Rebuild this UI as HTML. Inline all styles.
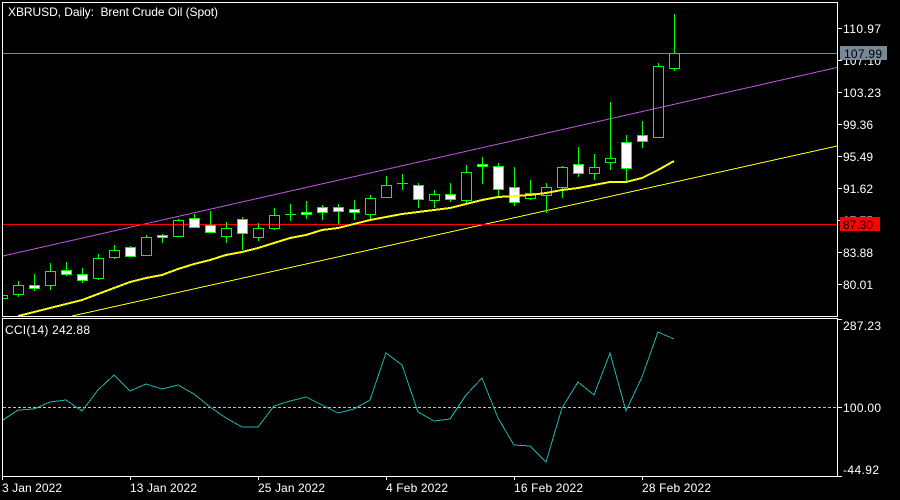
<!DOCTYPE html>
<html>
<head>
<meta charset="utf-8">
<style>
html,body{margin:0;padding:0;background:#000;width:900px;height:500px;overflow:hidden}
svg{display:block}
text{font-family:"Liberation Sans",sans-serif;font-size:12px;fill:#fff;white-space:pre}
.k{fill:#000}
</style>
</head>
<body>
<svg width="900" height="500" viewBox="0 0 900 500" xmlns="http://www.w3.org/2000/svg" shape-rendering="crispEdges">
<rect width="900" height="500" fill="#000"/>
<!-- channel and horizontal lines -->
<path d="M3 256L837 67.5" stroke="#ba55d3" fill="none"/>
<path d="M72 316L837 146" stroke="#ffff00" fill="none"/>
<path d="M3 224.5H837" stroke="#ff0000" fill="none"/>
<path d="M3 53.5H837" stroke="#778899" fill="none"/>
<!-- wicks -->
<path stroke="#00ff00" fill="none" d="M18.5 281V285M18.5 294V297M34.5 274V285M34.5 288V291M50.5 263V271M50.5 285V290M66.5 262V270M66.5 274V276M82.5 268V274M82.5 280V283M98.5 254V258M98.5 278V280M114.5 245V250M114.5 257V259M130.5 246V247M130.5 256V257M146.5 235V237M146.5 255V256M162.5 234V235M162.5 237V243M178.5 219V220M194.5 214V218M194.5 227V228M210.5 211V225M226.5 222V228M226.5 236V243M242.5 217V219M242.5 233V250M258.5 223V228M258.5 237V241M274.5 208V215M274.5 228V230M290.5 204V221M306.5 201V212M306.5 214V219M322.5 205V207M322.5 212V220M338.5 204V207M338.5 211V224M354.5 200V209M354.5 212V220M370.5 195V198M370.5 214V221M386.5 176V185M402.5 174V190M418.5 183V185M418.5 199V208M434.5 190V194M434.5 200V208M450.5 183V194M450.5 199V202M466.5 165V172M466.5 200V204M482.5 157V164M482.5 166V184M498.5 163V166M498.5 189V197M514.5 167V187M514.5 202V206M530.5 180V193M530.5 198V200M546.5 183V187M546.5 195V213M562.5 166V167M562.5 187V198M578.5 147V164M578.5 173V177M594.5 154V167M594.5 173V180M610.5 102V158M610.5 162V170M626.5 135V142M626.5 168V182M642.5 121V135M642.5 141V148M658.5 63V66M658.5 137V138M674.5 14V53M674.5 68V71M285 214.5H296M397 183.5H408"/>
<!-- hollow bodies -->
<path stroke="#00ff00" fill="none" d="M2.5 295.5h5v3h-5zM13.5 285.5h10v9h-10zM45.5 271.5h10v14h-10zM93.5 258.5h10v20h-10zM109.5 250.5h10v7h-10zM141.5 237.5h10v18h-10zM173.5 220.5h10v16h-10zM221.5 228.5h10v8h-10zM253.5 228.5h10v9h-10zM269.5 215.5h10v13h-10zM365.5 198.5h10v16h-10zM381.5 185.5h10v12h-10zM429.5 194.5h10v6h-10zM461.5 172.5h10v28h-10zM525.5 193.5h10v5h-10zM541.5 187.5h10v8h-10zM557.5 167.5h10v20h-10zM589.5 167.5h10v6h-10zM605.5 158.5h10v4h-10zM653.5 66.5h10v71h-10zM669.5 53.5h10v15h-10z"/>
<!-- white bodies -->
<path stroke="#00ff00" fill="#ffffff" d="M29.5 285.5h10v3h-10zM61.5 270.5h10v4h-10zM77.5 274.5h10v6h-10zM125.5 247.5h10v9h-10zM157.5 235.5h10v2h-10zM189.5 218.5h10v9h-10zM205.5 225.5h10v7h-10zM237.5 219.5h10v14h-10zM301.5 212.5h10v2h-10zM317.5 207.5h10v5h-10zM333.5 207.5h10v4h-10zM349.5 209.5h10v3h-10zM413.5 185.5h10v14h-10zM445.5 194.5h10v5h-10zM477.5 164.5h10v2h-10zM493.5 166.5h10v23h-10zM509.5 187.5h10v15h-10zM573.5 164.5h10v9h-10zM621.5 142.5h10v26h-10zM637.5 135.5h10v6h-10z"/>
<!-- moving average -->
<path stroke="#ffff00" stroke-width="2" fill="none" d="M18 316L82 300L98 294L114 288L130 282L146 278L162 275L178 269L194 264L210 260L226 255L242 252L258 248L274 243L290 238L306 235L322 230L338 228L354 224L370 220L386 217L402 214L418 212L434 210L450 208L466 204L482 200L498 197L514 196L530 195L546 193L562 190L578 188L594 185L610 182L626 182L642 178L658 170L674 161"/>
<!-- CCI -->
<path stroke="#c0c0c0" stroke-dasharray="3 2" fill="none" d="M3 407.5H837"/>
<path stroke="#20b2aa" fill="none" d="M3 420L18 410L34 409L50 402L66 400L82 411L98 390L114 375L130 391L146 384L162 389L178 385L194 394L210 407L226 418L242 427L258 427L274 406L290 401L306 397L322 405L338 413L354 409L370 400L386 353L402 365L418 412L434 421L450 419L466 395L482 378L498 418L514 445L530 446L546 462L562 408L578 382L594 395L610 353L626 411L642 377L658 332L674 339"/>
<!-- frames and ticks -->
<path stroke="#ffffff" fill="none" d="M2.5 2.5H837.5V316.5H2.5ZM2.5 318.5H837.5V476.5H2.5ZM838 28.5h4M838 60.5h4M838 92.5h4M838 124.5h4M838 156.5h4M838 188.5h4M838 220.5h4M838 252.5h4M838 284.5h4M838 319.5h4M838 407.5h4M838 476.5h4M2.5 477v3M130.5 477v3M258.5 477v3M386.5 477v3M514.5 477v3M642.5 477v3"/>
<!-- titles -->
<g shape-rendering="auto">
<text x="8" y="16" textLength="210">XBRUSD, Daily:  Brent Crude Oil (Spot)</text>
<text x="5" y="334" textLength="85">CCI(14) 242.88</text>
<text x="843" y="33" textLength="38">110.97</text>
<text x="843" y="65" textLength="38">107.10</text>
<text x="843" y="97" textLength="38">103.23</text>
<text x="843" y="129">99.36</text>
<text x="843" y="161">95.49</text>
<text x="843" y="193">91.62</text>
<text x="843" y="225">87.75</text>
<text x="843" y="257">83.88</text>
<text x="843" y="289">80.01</text>
<text x="843" y="330" textLength="38">287.23</text>
<text x="843" y="412" textLength="38">100.00</text>
<text x="843" y="474" textLength="36">-44.92</text>
<rect x="840" y="46" width="47" height="14" fill="#778899" shape-rendering="crispEdges"/>
<text x="844" y="58" class="k" textLength="38">107.99</text>
<rect x="840" y="217" width="40" height="14" fill="#ff0000" shape-rendering="crispEdges"/>
<text x="843" y="229" class="k">87.30</text>
<text x="2" y="492" textLength="60">3 Jan 2022</text>
<text x="130" y="492" textLength="67">13 Jan 2022</text>
<text x="258" y="492" textLength="67">25 Jan 2022</text>
<text x="386" y="492" textLength="62">4 Feb 2022</text>
<text x="514" y="492" textLength="69">16 Feb 2022</text>
<text x="642" y="492" textLength="69">28 Feb 2022</text>
</g>
</svg>
</body>
</html>
